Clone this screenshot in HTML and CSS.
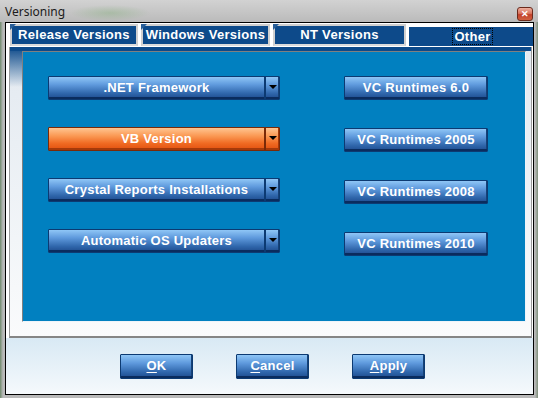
FILE: index.html
```html
<!DOCTYPE html>
<html lang="en">
<head>
    <meta charset="UTF-8">
    <meta name="viewport" content="width=device-width, initial-scale=1.0">
    <title>Versioning</title>
    <link rel="stylesheet" href="styles.css">
</head>
<body>
    <div class="window">
        <div class="titlebar">
            <span class="title">Versioning</span>
            <span class="close">&#x2715;</span>
        </div>
        <div class="client">
            <div class="tabs">
                <div class="tab tab-release">Release Versions</div>
                <div class="tab tab-windows">Windows Versions</div>
                <div class="tab tab-nt">NT Versions</div>
                <div class="tab tab-other selected"><span class="focus">Other</span></div>
            </div>
            <div class="tab-body">
                <div class="panel">
                    <div class="column left-col">
                        <button class="btn split"><span class="label">.NET Framework</span><span class="arrow"></span></button>
                        <button class="btn split orange"><span class="label">VB Version</span><span class="arrow"></span></button>
                        <button class="btn split"><span class="label">Crystal Reports Installations</span><span class="arrow"></span></button>
                        <button class="btn split"><span class="label">Automatic OS Updaters</span><span class="arrow"></span></button>
                    </div>
                    <div class="column right-col">
                        <button class="btn wide">VC Runtimes 6.0</button>
                        <button class="btn wide">VC Runtimes 2005</button>
                        <button class="btn wide">VC Runtimes 2008</button>
                        <button class="btn wide">VC Runtimes 2010</button>
                    </div>
                </div>
            </div>
            <div class="footer">
                <button class="btn small"><u>O</u>K</button>
                <button class="btn small"><u>C</u>ancel</button>
                <button class="btn small"><u>A</u>pply</button>
            </div>
        </div>
    </div>
</body>
</html>
```

FILE: styles.css
```css
body {
    margin: 0;
    width: 538px;
    height: 398px;
    overflow: hidden;
    background: linear-gradient(90deg, #6f8a6c 0, #b9b9b9 3px, #b9b9b9 535px, #7e8f7a 538px);
    font-family: "Liberation Sans", Arial, sans-serif;
}

.window {
    height: 398px;
    display: flex;
    flex-direction: column;
}

.titlebar {
    height: 22px;
    display: flex;
    align-items: center;
    justify-content: space-between;
    padding: 0 5px 0 5px;
    background:
        radial-gradient(ellipse 40px 8px at 110px 13px, rgba(120, 170, 110, 0.35), rgba(120, 170, 110, 0)),
        linear-gradient(180deg, #d2d2d2, #c4c4c4 60%, #bababa);
}

.title {
    font-family: "Noto Sans", "DejaVu Sans", sans-serif;
    font-size: 12px;
    color: #1b1b1b;
    margin-top: 1px;
}

.close {
    width: 16px;
    height: 14px;
    margin-top: 6px;
    border: 1px solid #6b2a1c;
    border-radius: 3px;
    background: linear-gradient(180deg, #eeb0a0, #d8735c 45%, #c2402a 55%, #d0603f);
    color: #fff;
    font-size: 9px;
    font-weight: bold;
    line-height: 14px;
    text-align: center;
    box-sizing: border-box;
    line-height: 12px;
}

.client {
    margin: 0 4px 0 5px;
    height: 373px;
    border: 1px solid #000;
    box-sizing: border-box;
    background: #fff;
    display: flex;
    flex-direction: column;
}

.tabs {
    display: flex;
    height: 23px;
    padding: 1px 0 0 4px;
    gap: 3px;
}

.tab {
    position: relative;
    box-sizing: border-box;
    height: 22px;
    background: #0d4a8a;
    border: 2px solid #d0d0d0;
    border-bottom: 2px solid #dcdcdc;
    color: #fff;
    font-weight: bold;
    font-size: 13px;
    letter-spacing: 0.3px;
    line-height: 17px;
    text-align: center;
    white-space: nowrap;
}

.tab::before {
    content: "";
    position: absolute;
    left: -2px;
    top: -2px;
    border-top: 6px solid #2a5f98;
    border-right: 6px solid transparent;
}

.tab-release { width: 128px; }
.tab-windows { width: 129px; }
.tab-nt { width: 133px; }

.tab-other {
    width: 124px;
    height: 19px;
    margin-top: 3px;
    border: none;
    line-height: 19px;
    padding-left: 3px;
}

.tab-other::before { display: none; }

.focus {
    border: 1px dotted #000;
    padding: 0 1px;
}

.tab-body {
    height: 291px;
    box-sizing: border-box;
    margin: 0 1px 0 3px;
    padding: 4px 5px 14px 12px;
    border-left: 1px solid #9a9a9a;
    border-right: 1px solid #9a9a9a;
    border-bottom: 2px solid #858585;
    background:
        linear-gradient(#0d4a8a, rgba(13, 74, 138, 0)) 0 0 / 12px 40px no-repeat,
        linear-gradient(#0d4a8a, #0d4a8a) 0 0 / 100% 4px no-repeat,
        linear-gradient(#e2e9f0, #fafbfc);
}

.panel {
    height: 271px;
    box-sizing: border-box;
    background: #0180c0;
    border-top: 1px solid #808080;
    border-left: 1px solid #808080;
    border-right: 1px solid #eef4fa;
    border-bottom: 1px solid #eef4fa;
    padding: 24px 0 0 25px;
    display: flex;
    gap: 64px;
}

.column {
    display: flex;
    flex-direction: column;
    gap: 27px;
}

.right-col {
    gap: 28px;
}

.btn {
    display: flex;
    align-items: center;
    justify-content: center;
    height: 24px;
    box-sizing: border-box;
    padding: 0 0 2px 0;
    border: 1px solid #0c3a72;
    border-radius: 1px;
    background: linear-gradient(180deg, #8fc6f6, #5f9add 35%, #2f66ab 75%, #1d4a8c);
    box-shadow: inset 0 -2px 0 #0a2c5e, inset -1px 0 0 #164277;
    color: #fff;
    font-family: "Liberation Sans", Arial, sans-serif;
    font-weight: bold;
    font-size: 13px;
    letter-spacing: 0.25px;
    white-space: nowrap;
}

.split {
    width: 232px;
    padding: 0;
    align-items: stretch;
}

.split .label {
    flex: 1;
    display: flex;
    align-items: center;
    justify-content: center;
    padding-bottom: 2px;
}

.split .arrow {
    width: 13px;
    border-left: 2px solid #0c3a72;
    display: flex;
    align-items: center;
    justify-content: center;
}

.split .arrow::after {
    content: "";
    border-top: 4px solid #000;
    border-left: 4px solid transparent;
    border-right: 4px solid transparent;
    margin-bottom: 2px;
}

.orange {
    border-color: #7a2a08;
    background: linear-gradient(180deg, #ffc591, #fb9a55 35%, #f06a22 70%, #e2500f);
    box-shadow: inset 0 -2px 0 #a63a0a, inset -1px 0 0 #a63a0a;
}

.orange .arrow {
    border-left-color: #7a2a08;
}

.wide {
    width: 144px;
}

.footer {
    flex: 1;
    display: flex;
    align-items: flex-start;
    gap: 43px;
    padding: 16px 0 0 114px;
    background: linear-gradient(180deg, #d8e9f4, #f5f9fc);
}

.small {
    width: 73px;
    height: 25px;
}

.small u {
    text-decoration-thickness: 1px;
    text-underline-offset: 2px;
}
```
